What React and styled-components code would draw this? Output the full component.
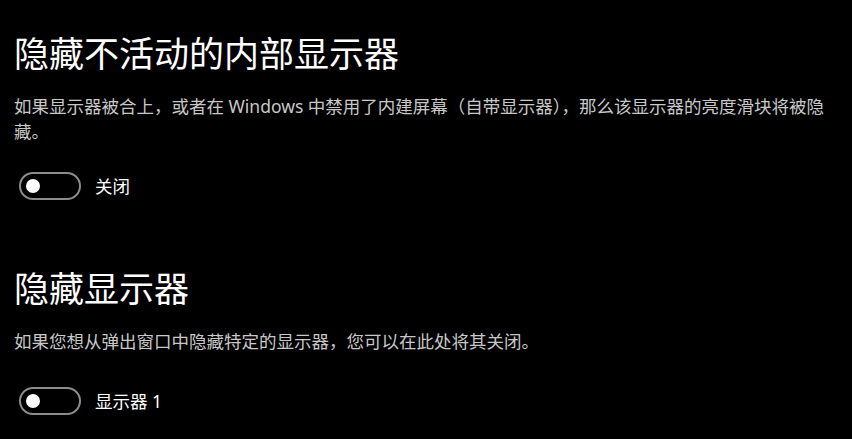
import React, { useState } from 'react';
import styled, { createGlobalStyle } from 'styled-components';

const GlobalStyle = createGlobalStyle`
  html, body {
    margin: 0;
    padding: 0;
    background-color: #000000;
  }
  body {
    font-family: "Noto Sans", "Noto Sans CJK SC", sans-serif;
    color: #ffffff;
  }
`

const Page = styled.div`
  width: 852px;
  height: 439px;
  overflow: hidden;
  padding: 31px 0 0 14px;
  box-sizing: border-box;
  display: flex;
  flex-direction: column;
  gap: 66px;
`
const Section = styled.section`
  display: flex;
  flex-direction: column;
`
const Title = styled.h2`
  margin: 0;
  font-size: 35px;
  font-weight: 400;
  line-height: 46px;
  color: #ffffff;
`
const Description = styled.p`
  margin: 17px 0 0 0;
  width: 818px;
  font-size: 17.5px;
  line-height: 25px;
  color: #c8c8c8;
`
const ToggleRow = styled.label`
  display: flex;
  flex-flow: row nowrap;
  align-items: center;
  gap: 14px;
  margin: ${(p) => p.$top}px 0 0 5px;
  cursor: pointer;
`
const Track = styled.span`
  position: relative;
  width: 62px;
  height: 28px;
  box-sizing: border-box;
  border: 2px solid ${(p) => (p.$on ? '#76b9ed' : '#8c8c8c')};
  background-color: ${(p) => (p.$on ? '#76b9ed' : 'transparent')};
  border-radius: 14px;
`
const Knob = styled.span`
  position: absolute;
  top: 5px;
  left: ${(p) => (p.$on ? '39px' : '5px')};
  width: 14px;
  height: 14px;
  border-radius: 50%;
  background-color: ${(p) => (p.$on ? '#000000' : '#ffffff')};
`
const ToggleText = styled.span`
  font-size: 17.5px;
  line-height: 25px;
  color: #ffffff;
`

function Toggle ({ label, top }) {
  const [on, setOn] = useState(false);
  return (
    <ToggleRow $top={top} onClick={() => setOn(!on)}>
      <Track $on={on}>
        <Knob $on={on} />
      </Track>
      <ToggleText>{label}</ToggleText>
    </ToggleRow>
  )
}

function App () {
  return (
    <>
      <GlobalStyle />
      <Page>
        <Section>
          <Title>隐藏不活动的内部显示器</Title>
          <Description>
            如果显示器被合上，或者在 Windows 中禁用了内建屏幕（自带显示器），那么该显示器的亮度滑块将被隐藏。
          </Description>
          <Toggle label="关闭" top={28} />
        </Section>
        <Section>
          <Title>隐藏显示器</Title>
          <Description>如果您想从弹出窗口中隐藏特定的显示器，您可以在此处将其关闭。</Description>
          <Toggle label="显示器 1" top={33} />
        </Section>
      </Page>
    </>
  )
};

export default App;
